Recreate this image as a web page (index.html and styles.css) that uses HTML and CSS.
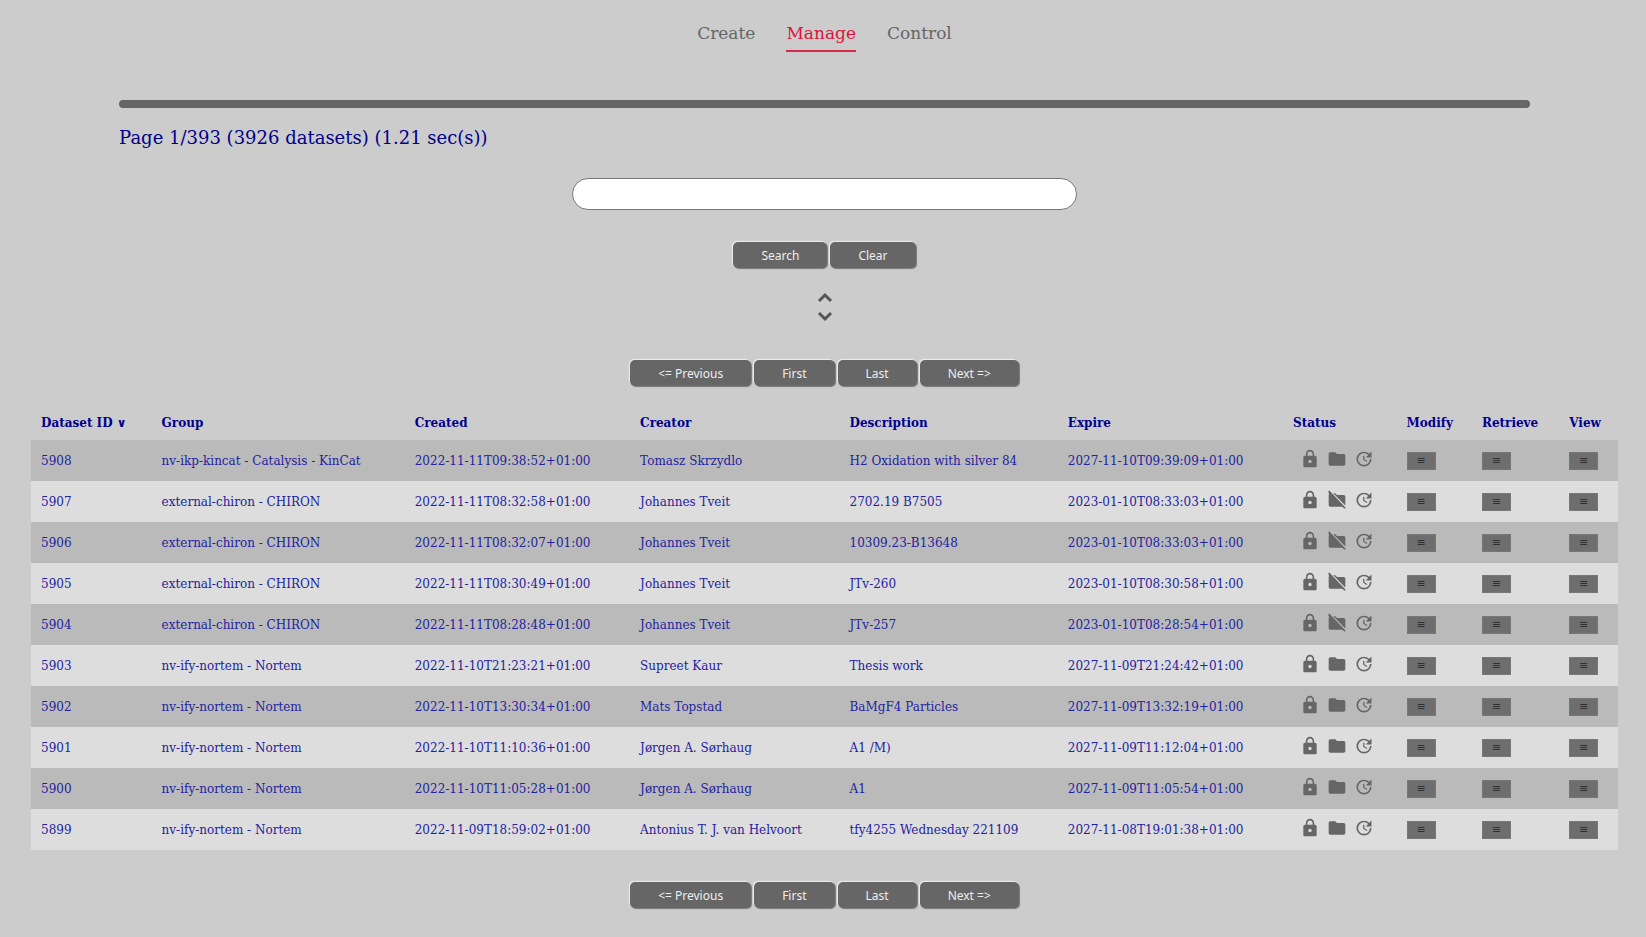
FILE: index.html
```html
<!DOCTYPE html>
<html lang="en">
<head>
<meta charset="utf-8">
<title>Manage datasets</title>
<link rel="stylesheet" href="styles.css">
<script src="datasets.js" defer></script>
</head>
<body>
<svg class="sprite" aria-hidden="true">
  <symbol id="lock" viewBox="0 0 24 24"><path d="M18 8h-1V6c0-2.760-2.240-5-5-5S7 3.240 7 6v2H6c-1.100 0-2 .9-2 2v10c0 1.100.9 2 2 2h12c1.100 0 2-.9 2-2V10c0-1.100-.9-2-2-2zm-6 9c-1.100 0-2-.9-2-2s.9-2 2-2 2 .9 2 2-.9 2-2 2zm3.100-9H8.900V6c0-1.710 1.390-3.100 3.100-3.100s3.100 1.390 3.100 3.100v2z"/></symbol>
  <symbol id="folder" viewBox="0 0 24 24"><path d="M10 4H4c-1.100 0-2 .9-2 2v12c0 1.100.9 2 2 2h16c1.100 0 2-.9 2-2V8c0-1.100-.9-2-2-2h-8l-2-2z"/></symbol>
  <symbol id="folder-off" viewBox="0 0 24 24"><path d="M22 18V8c0-1.100-.9-2-2-2h-8l-2-2H7.500L21.700 18.300zM1.400 1.800L2.800 .6 22.400 21.200 21 22.600 18.400 20H4c-1.100 0-2-.9-2-2V6c0-.5.200-1 .5-1.300z"/></symbol>
  <symbol id="update" viewBox="0 0 24 24"><path d="M21 10.120h-6.780l2.740-2.820c-2.730-2.700-7.150-2.800-9.880-.1-2.730 2.710-2.730 7.080 0 9.790s7.150 2.710 9.880 0C18.320 15.650 19 14.080 19 12.100h2c0 1.980-.88 4.550-2.640 6.290-3.510 3.480-9.210 3.480-12.720 0-3.500-3.470-3.530-9.110-.02-12.580s9.140-3.470 12.650 0L21 3v7.120zM12.500 8v4.250l3.500 2.080-.72 1.210L11 13V8h1.500z"/></symbol>
</svg>

<nav class="tabs">
  <a class="tab" href="#create">Create</a>
  <a class="tab active" href="#manage">Manage</a>
  <a class="tab" href="#control">Control</a>
</nav>

<main>
  <hr class="rule">
  <h1 class="summary">Page 1/393 (3926 datasets) (1.21 sec(s))</h1>

  <form class="search">
    <input class="query" type="text" aria-label="Search datasets">
    <div class="buttons">
      <button class="btn" type="submit">Search</button>
      <button class="btn" type="reset">Clear</button>
    </div>
  </form>

  <button class="expand" type="button" aria-label="Expand search options">
    <svg width="18" height="30" viewBox="0 0 18 30"><path d="M3 9L9 3L15 9M3 21L9 27L15 21"/></svg>
  </button>

  <div class="buttons">
    <button class="btn" type="button">&lt;= Previous</button>
    <button class="btn" type="button">First</button>
    <button class="btn" type="button">Last</button>
    <button class="btn" type="button">Next =&gt;</button>
  </div>

  <table class="datasets">
    <colgroup>
      <col class="c-id"><col class="c-group"><col class="c-date"><col class="c-creator"><col class="c-desc">
      <col class="c-date"><col class="c-status"><col class="c-modify"><col class="c-retrieve"><col class="c-view">
    </colgroup>
    <thead>
      <tr><th>Dataset ID ∨</th><th>Group</th><th>Created</th><th>Creator</th><th>Description</th><th>Expire</th><th>Status</th><th>Modify</th><th>Retrieve</th><th>View</th></tr>
    </thead>
    <tbody id="rows"></tbody>
  </table>

  <div class="buttons">
    <button class="btn" type="button">&lt;= Previous</button>
    <button class="btn" type="button">First</button>
    <button class="btn" type="button">Last</button>
    <button class="btn" type="button">Next =&gt;</button>
  </div>
</main>
</body>
</html>
```

FILE: styles.css
```css
* { box-sizing: border-box; }

body {
  margin: 0;
  padding: 0 28px 24px 31px;
  background: #ccc;
  color: #00008b;
  font-family: "DejaVu Serif", serif;
  font-size: 12px;
}

.sprite { display: none; }

.tabs {
  display: flex;
  justify-content: center;
  gap: 31px;
  padding-top: 21px;
}

.tab {
  padding-bottom: 5px;
  border-bottom: 2px solid transparent;
  color: #666;
  font-size: 17px;
  line-height: 24px;
  text-decoration: none;
}

.tab.active {
  border-color: #d8294d;
  color: #dc143c;
}

main {
  display: flex;
  flex-direction: column;
  align-items: center;
}

.rule {
  width: 88.9%;
  height: 8px;
  margin: 48px 0 18px;
  border: 0;
  border-radius: 4px;
  background: #666;
}

.summary {
  width: 88.9%;
  margin: 0;
  font-size: 18px;
  font-weight: normal;
  line-height: 24px;
}

.search {
  display: flex;
  flex-direction: column;
  align-items: center;
  width: 100%;
  margin-top: 28px;
}

.query {
  width: 31.8%;
  height: 32px;
  margin-bottom: 32px;
  padding: 0 16px;
  border: 1px solid #777;
  border-radius: 16px;
  background: #fff;
  font: inherit;
}

.buttons {
  display: flex;
  justify-content: center;
  gap: 3px;
}

.btn {
  height: 26px;
  padding: 0 28px;
  border: 0;
  border-radius: 5px;
  background: #666;
  box-shadow: -1px -1px 1px #eee, 1px 1px 1px #777;
  color: #eee;
  font-family: "Noto Sans", sans-serif;
  font-size: 12px;
}

.expand {
  margin: 24px 0 38px;
  padding: 0;
  border: 0;
  background: none;
}

.expand svg {
  display: block;
  fill: none;
  stroke: #555;
  stroke-width: 3;
}

.datasets {
  width: 100%;
  margin: 20px 0 32px;
  border-collapse: collapse;
  table-layout: fixed;
}

.c-id { width: 7.6%; }
.c-group { width: 15.95%; }
.c-date { width: 14.2%; }
.c-creator { width: 13.2%; }
.c-desc { width: 13.75%; }
.c-status { width: 7.15%; }
.c-modify { width: 4.75%; }
.c-retrieve { width: 5.5%; }
.c-view { width: 3.7%; }

th, td {
  height: 41px;
  padding: 0 0 0 10px;
  text-align: left;
  white-space: nowrap;
}

th { height: 34px; }

td { color: #2222a0; }

tbody tr { background: #ddd; }
tbody tr:nth-child(odd) { background: #bababa; }

.icons {
  display: flex;
  gap: 7px;
  padding: 0 0 3px 7px;
}

.icons svg {
  width: 20px;
  height: 20px;
  fill: #666;
}

.menu {
  display: block;
  width: 29px;
  height: 18px;
  padding: 0;
  border: 1px solid #777;
  background: #6e6e6e;
  color: #222;
  font-family: "DejaVu Serif", serif;
  font-size: 11px;
  line-height: 16px;
}
```

FILE: datasets.js
```javascript
const datasets = [
  ["5908", "nv-ikp-kincat - Catalysis - KinCat", "2022-11-11T09:38:52+01:00", "Tomasz Skrzydlo", "H2 Oxidation with silver 84", "2027-11-10T09:39:09+01:00", true],
  ["5907", "external-chiron - CHIRON", "2022-11-11T08:32:58+01:00", "Johannes Tveit", "2702.19 B7505", "2023-01-10T08:33:03+01:00", false],
  ["5906", "external-chiron - CHIRON", "2022-11-11T08:32:07+01:00", "Johannes Tveit", "10309.23-B13648", "2023-01-10T08:33:03+01:00", false],
  ["5905", "external-chiron - CHIRON", "2022-11-11T08:30:49+01:00", "Johannes Tveit", "JTv-260", "2023-01-10T08:30:58+01:00", false],
  ["5904", "external-chiron - CHIRON", "2022-11-11T08:28:48+01:00", "Johannes Tveit", "JTv-257", "2023-01-10T08:28:54+01:00", false],
  ["5903", "nv-ify-nortem - Nortem", "2022-11-10T21:23:21+01:00", "Supreet Kaur", "Thesis work", "2027-11-09T21:24:42+01:00", true],
  ["5902", "nv-ify-nortem - Nortem", "2022-11-10T13:30:34+01:00", "Mats Topstad", "BaMgF4 Particles", "2027-11-09T13:32:19+01:00", true],
  ["5901", "nv-ify-nortem - Nortem", "2022-11-10T11:10:36+01:00", "Jørgen A. Sørhaug", "A1 /M)", "2027-11-09T11:12:04+01:00", true],
  ["5900", "nv-ify-nortem - Nortem", "2022-11-10T11:05:28+01:00", "Jørgen A. Sørhaug", "A1", "2027-11-09T11:05:54+01:00", true],
  ["5899", "nv-ify-nortem - Nortem", "2022-11-09T18:59:02+01:00", "Antonius T. J. van Helvoort", "tfy4255 Wednesday 221109", "2027-11-08T19:01:38+01:00", true]
];

const icon = (name) => `<svg aria-hidden="true"><use href="#${name}"/></svg>`;
const menu = (action, id) => `<td><button class="menu" type="button" aria-label="${action} ${id}">≡</button></td>`;

document.getElementById("rows").innerHTML = datasets.map((row) => {
  const fields = row.slice(0, 6);
  const hasData = row[6];
  return `<tr>${fields.map((text) => `<td>${text}</td>`).join("")}
    <td><div class="icons">${icon("lock")}${icon(hasData ? "folder" : "folder-off")}${icon("update")}</div></td>
    ${menu("Modify", row[0])}${menu("Retrieve", row[0])}${menu("View", row[0])}</tr>`;
}).join("");
```
